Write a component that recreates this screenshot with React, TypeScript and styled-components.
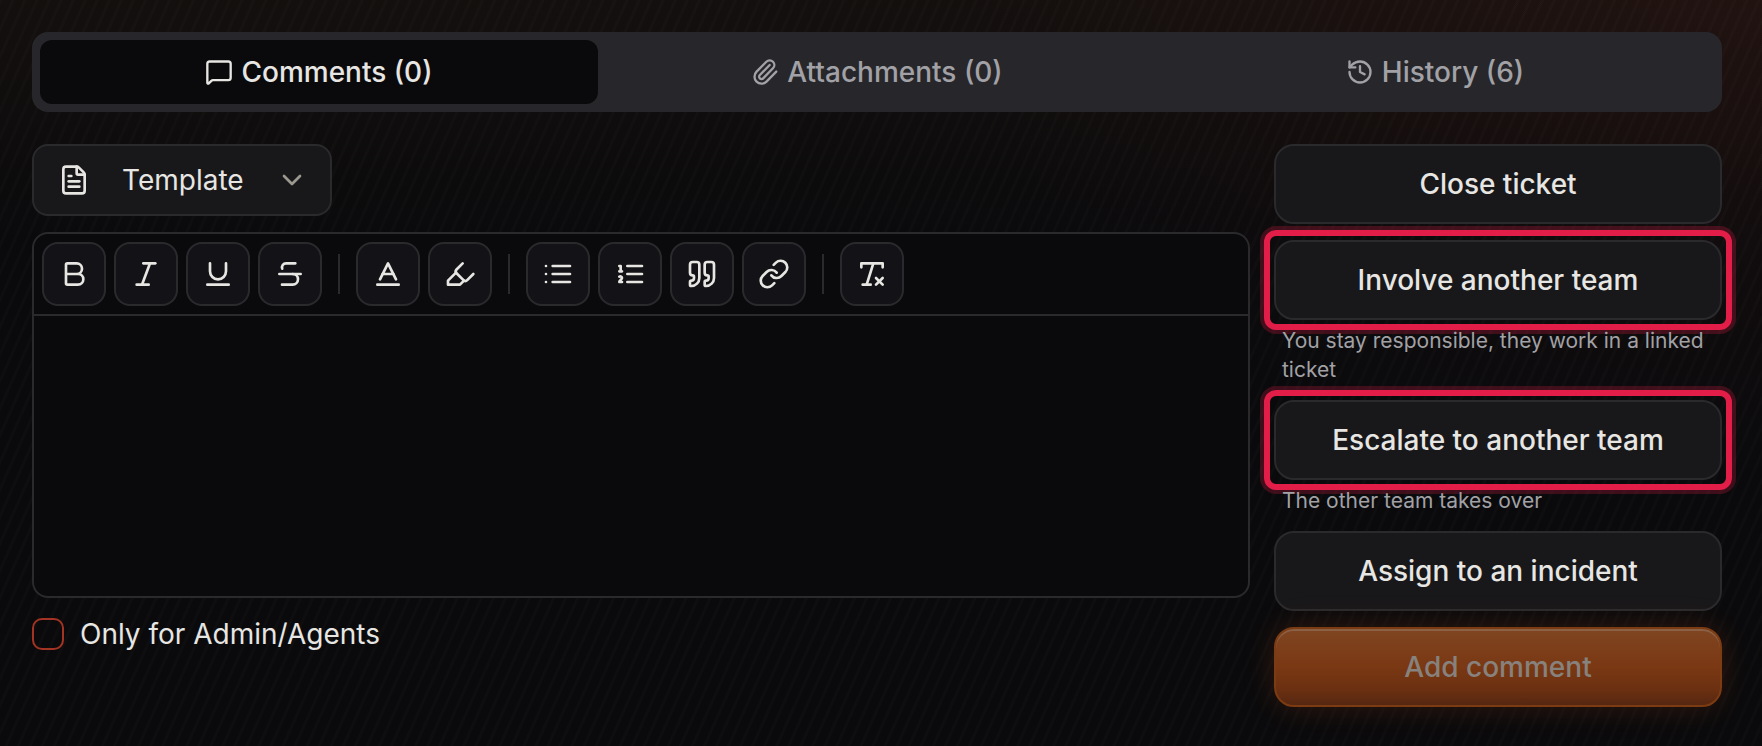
import React from 'react';
import styled, { createGlobalStyle, css } from 'styled-components';
import {
  Bold, Italic, Underline, Strikethrough, Baseline, Highlighter, Quote, Link, FileText,
  ChevronDown, MessageSquare, Paperclip, History, RemoveFormatting,
} from 'lucide-react';

const GlobalStyle = createGlobalStyle`
  *, *::before, *::after { box-sizing: border-box; }
  body { margin: 0; background: #0a0a0c; }
  button, textarea, input { font: inherit; color: inherit; margin: 0; }
`;

const Page = styled.main`
  min-height: 100vh;
  padding: 32px 40px 32px 32px;
  color: #e7e6e3;
  font-family: Inter, 'Liberation Sans', sans-serif;
  font-size: 28px;
  line-height: 40px;
  background:
    repeating-linear-gradient(114deg, rgba(255, 240, 220, 0.014) 0 2px, transparent 3px 10px, rgba(255, 240, 220, 0.014) 11px),
    radial-gradient(ellipse 800px 480px at 100% 0, rgba(150, 50, 35, 0.1), transparent),
    linear-gradient(rgba(150, 90, 40, 0.07), transparent 240px),
    #0a0a0c;
`;

const TabList = styled.div`
  display: grid;
  grid-template-columns: repeat(3, 1fr);
  padding: 8px;
  border-radius: 16px;
  background: #27272b;
`;

const Tab = styled.button<{ $active?: boolean }>`
  display: flex;
  align-items: center;
  justify-content: center;
  gap: 8px;
  height: 64px;
  padding: 0 16px;
  border: 0;
  border-radius: 12px;
  font-weight: 500;
  color: ${p => (p.$active ? '#e7e6e3' : '#a1a1a6')};
  background: ${p => (p.$active ? '#0a0a0c' : 'transparent')};
`;

const Columns = styled.div`
  display: grid;
  grid-template-columns: minmax(0, 1fr) 448px;
  gap: 24px;
  align-items: start;
  margin-top: 32px;
`;

const Composer = styled.form`
  display: flex;
  flex-direction: column;
  align-items: flex-start;
  gap: 16px;
`;

const raised = css`
  border: 2px solid #2a2a2d;
  background: #18181a;
`;

const TemplateButton = styled.button`
  ${raised}
  display: grid;
  grid-template-columns: 32px 1fr 32px;
  align-items: center;
  column-gap: 32px;
  width: 300px;
  height: 72px;
  padding: 0 24px;
  border-radius: 16px;
  text-align: left;
`;

const Editor = styled.div`
  width: 100%;
  border: 2px solid #2a2a2d;
  border-radius: 16px;
  background: #0a0a0c;
`;

const Toolbar = styled.div`
  display: flex;
  align-items: center;
  gap: 8px;
  padding: 8px;
  border-bottom: 2px solid #2a2a2d;
`;

const ToolButton = styled.button`
  display: grid;
  place-items: center;
  width: 64px;
  height: 64px;
  padding: 0;
  border: 2px solid #2a2a2d;
  border-radius: 16px;
  background: #131317;
`;

const Divider = styled.span`
  width: 2px;
  height: 40px;
  margin: 0 8px;
  background: #2a2a2d;
`;

const TextArea = styled.textarea`
  display: block;
  width: 100%;
  height: 280px;
  padding: 16px 24px;
  border: 0;
  outline: 0;
  resize: none;
  background: transparent;
`;

const CheckLabel = styled.label`
  display: flex;
  align-items: center;
  gap: 16px;
`;

const Checkbox = styled.input`
  appearance: none;
  width: 32px;
  height: 32px;
  border: 2px solid #a33323;
  border-radius: 10px;
`;

const Actions = styled.aside`
  display: flex;
  flex-direction: column;
  gap: 16px;
`;

const ActionButton = styled.button<{ $highlighted?: boolean }>`
  ${raised}
  display: block;
  width: 100%;
  height: 80px;
  padding: 0 16px;
  border-radius: 20px;
  font-weight: 500;
  position: relative;
  ${p => p.$highlighted && css`
    &::after {
      content: '';
      position: absolute;
      inset: -12px;
      border: 6px solid #e11d48;
      border-radius: 12px;
      box-shadow: 0 0 0 4px rgba(225, 29, 72, 0.25);
    }
  `}
`;

const SubmitButton = styled(ActionButton)`
  border-color: #7d3b12;
  color: #87827d;
  background: linear-gradient(#7f4521, #7a3813 50%, #6b3011 80%, #562711);
  box-shadow: 0 0 32px rgba(200, 80, 30, 0.2), inset 0 2px 0 #8a6046;
`;

const Note = styled.p`
  position: relative;
  z-index: 1;
  margin: 6px 0 0;
  padding: 0 8px;
  font-size: 21px;
  line-height: 29px;
  color: #a1a1a6;
`;

const ListSvg = styled.svg.attrs({
  width: 32,
  height: 32,
  viewBox: '0 0 24 24',
  fill: 'none',
  stroke: 'currentColor',
  strokeWidth: 2,
  strokeLinecap: 'round',
  strokeLinejoin: 'round',
})``;

export default function App() {
  return (
    <>
      <GlobalStyle />
      <Page>
        <TabList role="tablist">
          <Tab role="tab" aria-selected="true" $active><MessageSquare size={28} />Comments (0)</Tab>
          <Tab role="tab" aria-selected="false"><Paperclip size={28} />Attachments (0)</Tab>
          <Tab role="tab" aria-selected="false"><History size={28} />History (6)</Tab>
        </TabList>
        <Columns>
          <Composer>
            <TemplateButton type="button">
              <FileText size={32} />
              <span>Template</span>
              <ChevronDown size={32} color="#9b9890" />
            </TemplateButton>
            <Editor>
              <Toolbar role="toolbar" aria-label="Formatting">
                <ToolButton type="button" aria-label="Bold"><Bold size={32} /></ToolButton>
                <ToolButton type="button" aria-label="Italic"><Italic size={32} /></ToolButton>
                <ToolButton type="button" aria-label="Underline"><Underline size={32} /></ToolButton>
                <ToolButton type="button" aria-label="Strikethrough"><Strikethrough size={32} /></ToolButton>
                <Divider />
                <ToolButton type="button" aria-label="Text colour"><Baseline size={32} /></ToolButton>
                <ToolButton type="button" aria-label="Highlight"><Highlighter size={32} /></ToolButton>
                <Divider />
                <ToolButton type="button" aria-label="Bullet list">
                  <ListSvg><path d="M8 6h13M8 12h13M8 18h13M3 6h.01M3 12h.01M3 18h.01" /></ListSvg>
                </ToolButton>
                <ToolButton type="button" aria-label="Numbered list">
                  <ListSvg>
                    <path d="M10 6h11M10 12h11M10 18h11" />
                    <path d="M4 6h1v4M4 10h2M6 18H4c0-1 2-2 2-3s-1-1.5-2-1" />
                  </ListSvg>
                </ToolButton>
                <ToolButton type="button" aria-label="Quote"><Quote size={32} /></ToolButton>
                <ToolButton type="button" aria-label="Link"><Link size={32} /></ToolButton>
                <Divider />
                <ToolButton type="button" aria-label="Clear formatting"><RemoveFormatting size={32} /></ToolButton>
              </Toolbar>
              <TextArea aria-label="Comment" />
            </Editor>
            <CheckLabel><Checkbox type="checkbox" />Only for Admin/Agents</CheckLabel>
          </Composer>
          <Actions>
            <ActionButton type="button">Close ticket</ActionButton>
            <div>
              <ActionButton type="button" $highlighted>Involve another team</ActionButton>
              <Note>You stay responsible, they work in a linked ticket</Note>
            </div>
            <div>
              <ActionButton type="button" $highlighted>Escalate to another team</ActionButton>
              <Note>The other team takes over</Note>
            </div>
            <ActionButton type="button">Assign to an incident</ActionButton>
            <SubmitButton type="button" disabled>Add comment</SubmitButton>
          </Actions>
        </Columns>
      </Page>
    </>
  );
}
